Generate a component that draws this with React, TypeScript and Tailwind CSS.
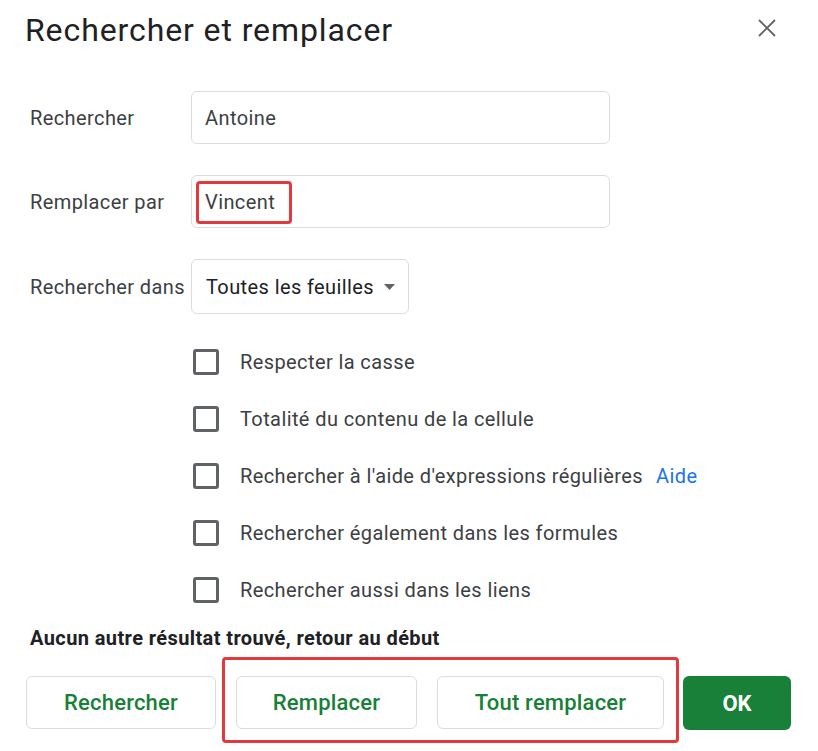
import React from 'react';

const options = [
  'Respecter la casse',
  'Totalité du contenu de la cellule',
  "Rechercher à l'aide d'expressions régulières",
  'Rechercher également dans les formules',
  'Rechercher aussi dans les liens',
];

const Checkbox: React.FC<{ label: string; help?: boolean }> = ({ label, help }) => (
  <div className="flex h-[57px] items-center">
    <div className="h-[26px] w-[26px] rounded-[3px] border-[3px] border-[#5f6368]" />
    <span className="ml-[21px] text-[20px] tracking-[0.4px] text-[#3c4043]">{label}</span>
    {help && <span className="ml-[13px] text-[20px] tracking-[0.4px] text-[#1a73e8]">Aide</span>}
  </div>
);

const App: React.FC = () => {
  return (
    <div
      className="relative h-[751px] w-[818px] overflow-hidden bg-white text-[#202124]"
      style={{ fontFamily: 'Roboto, "Liberation Sans", sans-serif' }}
    >
      {/* header */}
      <div className="flex h-[60px] items-center justify-between pl-[25px] pr-[42px]">
        <h1 className="text-[32px] font-normal leading-none tracking-[0.9px] text-[#202124]">
          Rechercher et remplacer
        </h1>
        <svg width="18" height="18" viewBox="0 0 18 18" className="mt-[-4px]">
          <path d="M1 1L17 17M17 1L1 17" stroke="#5f6368" strokeWidth="1.8" />
        </svg>
      </div>

      {/* form */}
      <div className="mt-[31px] pl-[30px]">
        <div className="flex items-center">
          <label className="w-[161px] text-[20px] tracking-[0.4px] text-[#3c4043]">Rechercher</label>
          <div className="flex h-[53px] w-[419px] items-center rounded-[6px] border border-[#dadce0] px-[13px] text-[20px] tracking-[0.4px] text-[#3c4043]">
            Antoine
          </div>
        </div>

        <div className="mt-[31px] flex items-center">
          <label className="w-[161px] text-[20px] tracking-[0.4px] text-[#3c4043]">Remplacer par</label>
          <div className="relative flex h-[53px] w-[419px] items-center rounded-[6px] border border-[#dadce0] px-[13px] text-[20px] tracking-[0.4px] text-[#3c4043]">
            Vincent
            <div className="absolute left-[4px] top-[5px] h-[43px] w-[96px] rounded-[4px] border-[3px] border-[#e0393e]" />
          </div>
        </div>

        <div className="mt-[31px] flex items-center">
          <label className="w-[161px] text-[20px] tracking-[0.4px] text-[#3c4043]">Rechercher dans</label>
          <div className="flex h-[55px] w-[218px] items-center justify-between rounded-[6px] border border-[#dadce0] pl-[14px] pr-[13px] text-[20px] tracking-[0.4px] text-[#202124]">
            Toutes les feuilles
            <svg width="11" height="6" viewBox="0 0 11 6">
              <path d="M0 0H11L5.5 6Z" fill="#5f6368" />
            </svg>
          </div>
        </div>

        {/* options */}
        <div className="ml-[163px] mt-[19px]">
          {options.map((o, i) => (
            <Checkbox key={o} label={o} help={i === 2} />
          ))}
        </div>

        <p className="mt-[8px] h-[24px] text-[20px] font-bold leading-[24px] tracking-[0.4px] text-[#202124]">
          Aucun autre résultat trouvé, retour au début
        </p>
      </div>

      {/* actions */}
      <div className="relative mt-[26px] flex pl-[26px]">
        <button className="h-[53px] w-[190px] rounded-[6px] border border-[#dadce0] text-[22px] font-medium tracking-[0.2px] text-[#188038]">
          Rechercher
        </button>
        <button className="ml-[20px] h-[53px] w-[181px] rounded-[6px] border border-[#dadce0] text-[22px] font-medium tracking-[0.2px] text-[#188038]">
          Remplacer
        </button>
        <button className="ml-[20px] h-[53px] w-[227px] rounded-[6px] border border-[#dadce0] text-[22px] font-medium tracking-[0.2px] text-[#188038]">
          Tout remplacer
        </button>
        <button className="ml-[19px] h-[54px] w-[108px] rounded-[6px] bg-[#188038] text-[22px] font-bold text-white">
          OK
        </button>
        <div className="absolute left-[222px] top-[-19px] h-[86px] w-[457px] rounded-[4px] border-[3px] border-[#e0393e]" />
      </div>
    </div>
  );
};

export default App;
